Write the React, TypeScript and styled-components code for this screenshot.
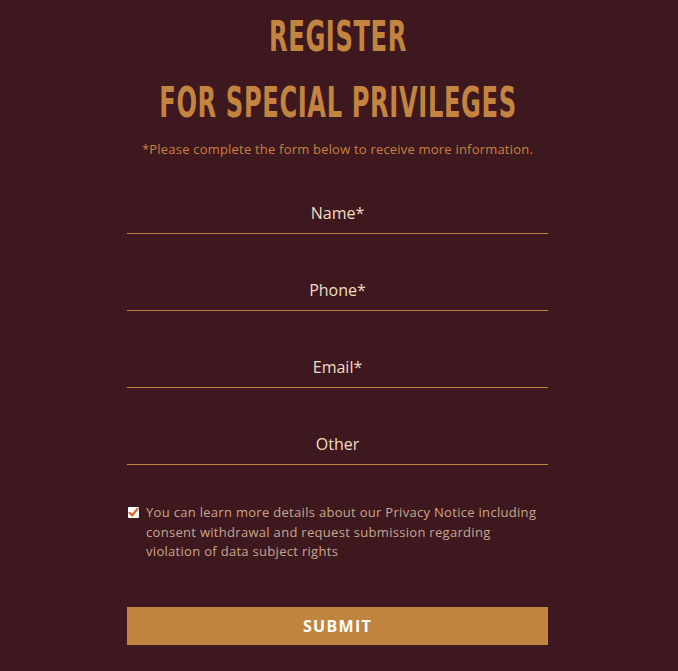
import React, { useState } from 'react';
import styled, { createGlobalStyle } from 'styled-components';

const GlobalStyle = createGlobalStyle`
  html, body {
    margin: 0;
    padding: 0;
    background: #3d181e;
  }
  * {
    box-sizing: border-box;
  }
`;

const Page = styled.div`
  min-height: 671px;
  background: #3d181e;
  display: flex;
  flex-direction: column;
  align-items: center;
  padding: 3px 3px 0 0;
  font-family: 'Open Sans', 'Liberation Sans', sans-serif;
`;

const Title = styled.h1`
  margin: 0;
  font-family: 'DejaVu Sans Condensed', 'DejaVu Sans', sans-serif;
  font-stretch: condensed;
  font-weight: 700;
  font-size: 43px;
  line-height: 66px;
  color: #c3843f;
  text-align: center;
  letter-spacing: 1px;
  white-space: nowrap;
  transform: scaleX(0.625);
`;

const Subtitle = styled.p`
  margin: 5px 0 0;
  font-size: 13px;
  line-height: 18px;
  color: #c8813f;
  text-align: center;
  letter-spacing: 0.2px;
`;

const Form = styled.form`
  width: 421px;
  margin-top: 14px;
  display: flex;
  flex-direction: column;
`;

const Field = styled.input`
  width: 100%;
  height: 77px;
  padding: 36px 0 0;
  background: transparent;
  border: none;
  border-bottom: 1px solid #c3843f;
  color: #f3dcc4;
  font-family: 'Open Sans', 'Liberation Sans', sans-serif;
  font-size: 16px;
  text-align: center;
  outline: none;

  &::placeholder {
    color: #f3dcc4;
    opacity: 1;
  }

  &:first-child {
    height: 62px;
    padding-top: 21px;
  }
`;

const Consent = styled.label`
  display: flex;
  align-items: flex-start;
  gap: 7px;
  margin-top: 38px;
  font-size: 13px;
  line-height: 19.5px;
  letter-spacing: 0.3px;
  color: #c9a68e;
  cursor: pointer;
`;

const HiddenInput = styled.input`
  position: absolute;
  opacity: 0;
  width: 0;
  height: 0;
`;

const Box = styled.span`
  margin: 4px 0 0 1px;
  width: 11px;
  height: 11px;
  flex-shrink: 0;
  background: #ffffff;
  border-radius: 1px;
  display: flex;
  align-items: center;
  justify-content: center;
`;

const App: React.FC = () => {
  const [agree, setAgree] = useState(true);

  return (
    <Page>
      <GlobalStyle />
      <Title>
        REGISTER
        <br />
        FOR SPECIAL PRIVILEGES
      </Title>
      <Subtitle>*Please complete the form below to receive more information.</Subtitle>
      <Form onSubmit={(e) => e.preventDefault()}>
        <Field type="text" placeholder="Name*" />
        <Field type="tel" placeholder="Phone*" />
        <Field type="email" placeholder="Email*" />
        <Field type="text" placeholder="Other" />
        <Consent>
          <HiddenInput type="checkbox" checked={agree} onChange={() => setAgree(!agree)} />
          <Box>
            {agree && (
              <svg width="11" height="11" viewBox="0 0 11 11">
                <path
                  d="M1.5 5.8 L4.2 8.4 L9.6 1.8"
                  fill="none"
                  stroke="#e4622a"
                  strokeWidth="2.2"
                  strokeLinecap="round"
                  strokeLinejoin="round"
                />
              </svg>
            )}
          </Box>
          <span>
            You can learn more details about our Privacy Notice including consent withdrawal and
            request submission regarding violation of data subject rights
          </span>
        </Consent>
        <Submit type="submit">SUBMIT</Submit>
      </Form>
    </Page>
  );
};

const Submit = styled.button`
  margin-top: 45px;
  height: 38px;
  width: 100%;
  border: none;
  background: #c1843f;
  color: #ffffff;
  font-family: 'Open Sans', 'Liberation Sans', sans-serif;
  font-weight: 700;
  font-size: 16px;
  letter-spacing: 1.3px;
  cursor: pointer;
`;

export default App;
